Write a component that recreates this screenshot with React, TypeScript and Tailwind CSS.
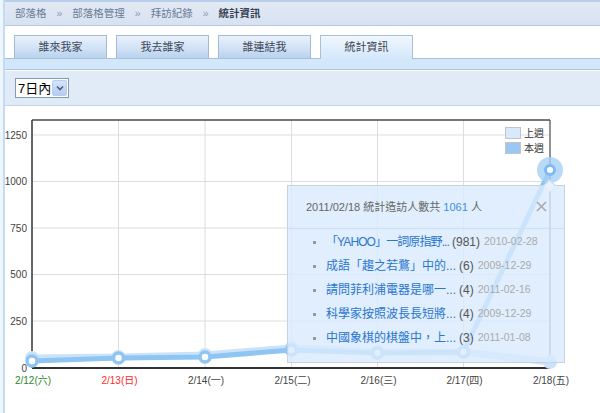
const tabs = ["誰來我家", "我去誰家", "誰連結我", "統計資訊"];

const items = [
  { t: "「YAHOO」一詞原指野...", n: 981, d: "2010-02-28" },
  { t: "成語「趨之若鶩」中的...", n: 6, d: "2009-12-29" },
  { t: "請問菲利浦電器是哪一...", n: 4, d: "2011-02-16" },
  { t: "科學家按照波長長短將...", n: 4, d: "2009-12-29" },
  { t: "中國象棋的棋盤中，上...", n: 3, d: "2011-01-08" },
];

// chart in page coordinates
const xs = [32, 118.5, 205, 291.5, 377.5, 463.5, 550];
const yTicks = [
  { v: "1250", y: 135 },
  { v: "1000", y: 181.5 },
  { v: "750", y: 228 },
  { v: "500", y: 274.5 },
  { v: "250", y: 321 },
  { v: "0", y: 368 },
];
const thisWeek = [361, 358, 357, 350, 353, 352, 170];
const lastWeek = [358, 357, 355, 348, 352, 352, 362];
const days = [
  { l: "2/12(六)", c: "#2a8a2a" },
  { l: "2/13(日)", c: "#ff2a2a" },
  { l: "2/14(一)", c: "#444" },
  { l: "2/15(二)", c: "#444" },
  { l: "2/16(三)", c: "#444" },
  { l: "2/17(四)", c: "#444" },
  { l: "2/18(五)", c: "#444" },
];

function pts(ys: number[]) {
  return ys.map((y, i) => `${xs[i]},${y}`).join(" ");
}

function Chart() {
  return (
    <svg width={595} height={307} viewBox="5 106 595 307" className="block">
      {yTicks.slice(0, 5).map((t) => (
        <line key={t.v} x1={32} x2={550} y1={t.y} y2={t.y} stroke="#dedede" strokeWidth={1} />
      ))}
      {xs.slice(1, 6).map((x) => (
        <line key={x} x1={x} x2={x} y1={120} y2={368} stroke="#dedede" strokeWidth={1} />
      ))}
      <line x1={32} x2={550} y1={120} y2={120} stroke="#4a4a4a" strokeWidth={1.5} />
      <line x1={550} x2={550} y1={120} y2={368} stroke="#4a4a4a" strokeWidth={1.2} />
      <line x1={32} x2={32} y1={120} y2={368} stroke="#333" strokeWidth={1.5} />
      <line x1={32} x2={550} y1={368} y2={368} stroke="#333" strokeWidth={2} />

      {yTicks.map((t) => (
        <text key={t.v} x={27} y={t.y + 3.5} textAnchor="end" fontSize={10} fill="#444">
          {t.v}
        </text>
      ))}
      {days.map((d, i) => (
        <text key={d.l} x={xs[i] + 1} y={384} textAnchor="middle" fontSize={10} fill={d.c}>
          {d.l}
        </text>
      ))}

      {/* legend */}
      <rect x={505.5} y={127.5} width={15} height={11} fill="#d8e9fb" stroke="#c4c4c4" />
      <rect x={505.5} y={142.5} width={15} height={11} fill="#98c8f3" stroke="#c4c4c4" />
      <text x={524} y={137} fontSize={10} fill="#333">上週</text>
      <text x={524} y={152} fontSize={10} fill="#333">本週</text>

      {/* last week */}
      <polyline points={pts(lastWeek)} fill="none" stroke="#cbe3fa" strokeWidth={7} strokeLinejoin="round" />
      {lastWeek.map((y, i) => (
        <circle key={i} cx={xs[i]} cy={y} r={7} fill="#cbe3fa" />
      ))}
      {/* this week */}
      <polyline points={pts(thisWeek)} fill="none" stroke="#8ec5f3" strokeWidth={5} strokeLinejoin="round" />
      {thisWeek.slice(0, 6).map((y, i) => (
        <circle key={i} cx={xs[i]} cy={y} r={5} fill="#fff" stroke="#8ec5f3" strokeWidth={3.5} />
      ))}
      <circle cx={550} cy={170} r={13} fill="#a6d0f6" opacity={0.8} />
      <circle cx={550} cy={170} r={4.5} fill="#fff" stroke="#7dbbf0" strokeWidth={3} />
    </svg>
  );
}

export default function App() {
  return (
    <div
      className="w-[600px] h-[413px] overflow-hidden bg-[#eef5fd] pl-[3px]"
      style={{ fontFamily: '"Liberation Sans", "Noto Sans CJK TC", sans-serif' }}
    >
      <div className="h-full border-l-2 border-[#c4dbf6] bg-white flex flex-col">
        {/* breadcrumb */}
        <div className="h-[26px] shrink-0 border-t-2 border-b border-t-[#b8cfec] border-b-[#b3c9e6] bg-gradient-to-b from-[#e3eaf5] to-[#d7e1f0] flex items-center gap-[10px] pl-[10px] text-[10.5px] text-[#6a7b95]">
          <span>部落格</span>
          <span className="text-[#8d9cb2]">»</span>
          <span>部落格管理</span>
          <span className="text-[#8d9cb2]">»</span>
          <span>拜訪紀錄</span>
          <span className="text-[#8d9cb2]">»</span>
          <span className="font-bold text-[#3a4454]">統計資訊</span>
        </div>

        {/* tabs */}
        <div className="h-[32px] shrink-0 flex items-end gap-[9px] pl-[9px]">
          {tabs.map((t, i) =>
            i === 3 ? (
              <div
                key={t}
                className="w-[93px] h-[24px] -mb-px relative z-10 border border-b-0 border-[#a9c0da] bg-gradient-to-b from-[#f0f7fe] to-[#d3e7fa] flex items-center justify-center text-[11px] text-[#3f4650]"
              >
                {t}
              </div>
            ) : (
              <div
                key={t}
                className="w-[93px] h-[23px] border border-b-0 border-[#a3bbd6] bg-gradient-to-b from-[#e9f1fb] via-[#d4e4f6] to-[#b9d2ee] flex items-center justify-center text-[11px] text-[#3f4a5a]"
              >
                {t}
              </div>
            )
          )}
        </div>
        <div className="h-[12px] shrink-0 bg-[#d3e7fa] border-t border-[#a9c0da] border-b border-b-[#aac6e6]" />

        {/* filter */}
        <div className="h-[36px] shrink-0 border-t border-white border-b border-b-[#c3d3e8] bg-[#e1eaf7] flex items-center pl-[10px]">
          <div className="w-[54px] h-[20px] border border-[#7f9db9] bg-white flex items-center justify-between pl-[2px] pr-[1px]">
            <span className="text-[13px] leading-none text-black">7日內</span>
            <span className="w-[15px] h-[16px] rounded-[2px] border border-[#b8cdee] bg-gradient-to-b from-[#d7e4f9] to-[#b4cbf2] flex items-center justify-center">
              <svg width="8" height="6" viewBox="0 0 8 6">
                <path d="M1 1.5 L4 4.5 L7 1.5" fill="none" stroke="#4a5f86" strokeWidth="1.6" />
              </svg>
            </span>
          </div>
        </div>

        {/* chart */}
        <div className="relative h-[307px] shrink-0">
          <Chart />
          <div className="absolute left-[282px] top-[79px] w-[278px] h-[178px] border border-[#c4d3e4] bg-[#d9eafd]/[0.82]">
            <div className="absolute left-[257px] -top-[5px] w-[9px] h-[9px] rotate-45 border-t border-l border-[#c4d3e4] bg-[#e6f1fd]" />
            <div className="h-[43px] border-b border-[#cddff2] flex items-center justify-between pl-[18px] pr-[17px]">
              <span className="text-[11px] text-[#666]">
                2011/02/18 統計造訪人數共 <span className="text-[#3d8ee0]">1061</span> 人
              </span>
              <svg width="11" height="11" viewBox="0 0 11 11" className="-mt-[2px]">
                <path d="M1 1 L10 10 M10 1 L1 10" stroke="#a9a9a9" strokeWidth="1.6" />
              </svg>
            </div>
            <ul className="pt-px">
              {items.map((it, i) => (
                <li key={it.t} className="h-[24px] flex items-center pl-[25px] whitespace-nowrap">
                  <span className="w-[3px] h-[3px] bg-[#9a9a9a] mr-[10px]" />
                  <span className={`text-[12px] text-[#2a76d0] ${i === 0 ? "tracking-[-0.9px]" : ""}`}>{it.t}</span>
                  <span className="text-[12px] text-[#555] ml-[3px]">({it.n})</span>
                  <span className="text-[10.5px] text-[#aaa] ml-[4px]">{it.d}</span>
                </li>
              ))}
            </ul>
          </div>
        </div>
      </div>
    </div>
  );
}
